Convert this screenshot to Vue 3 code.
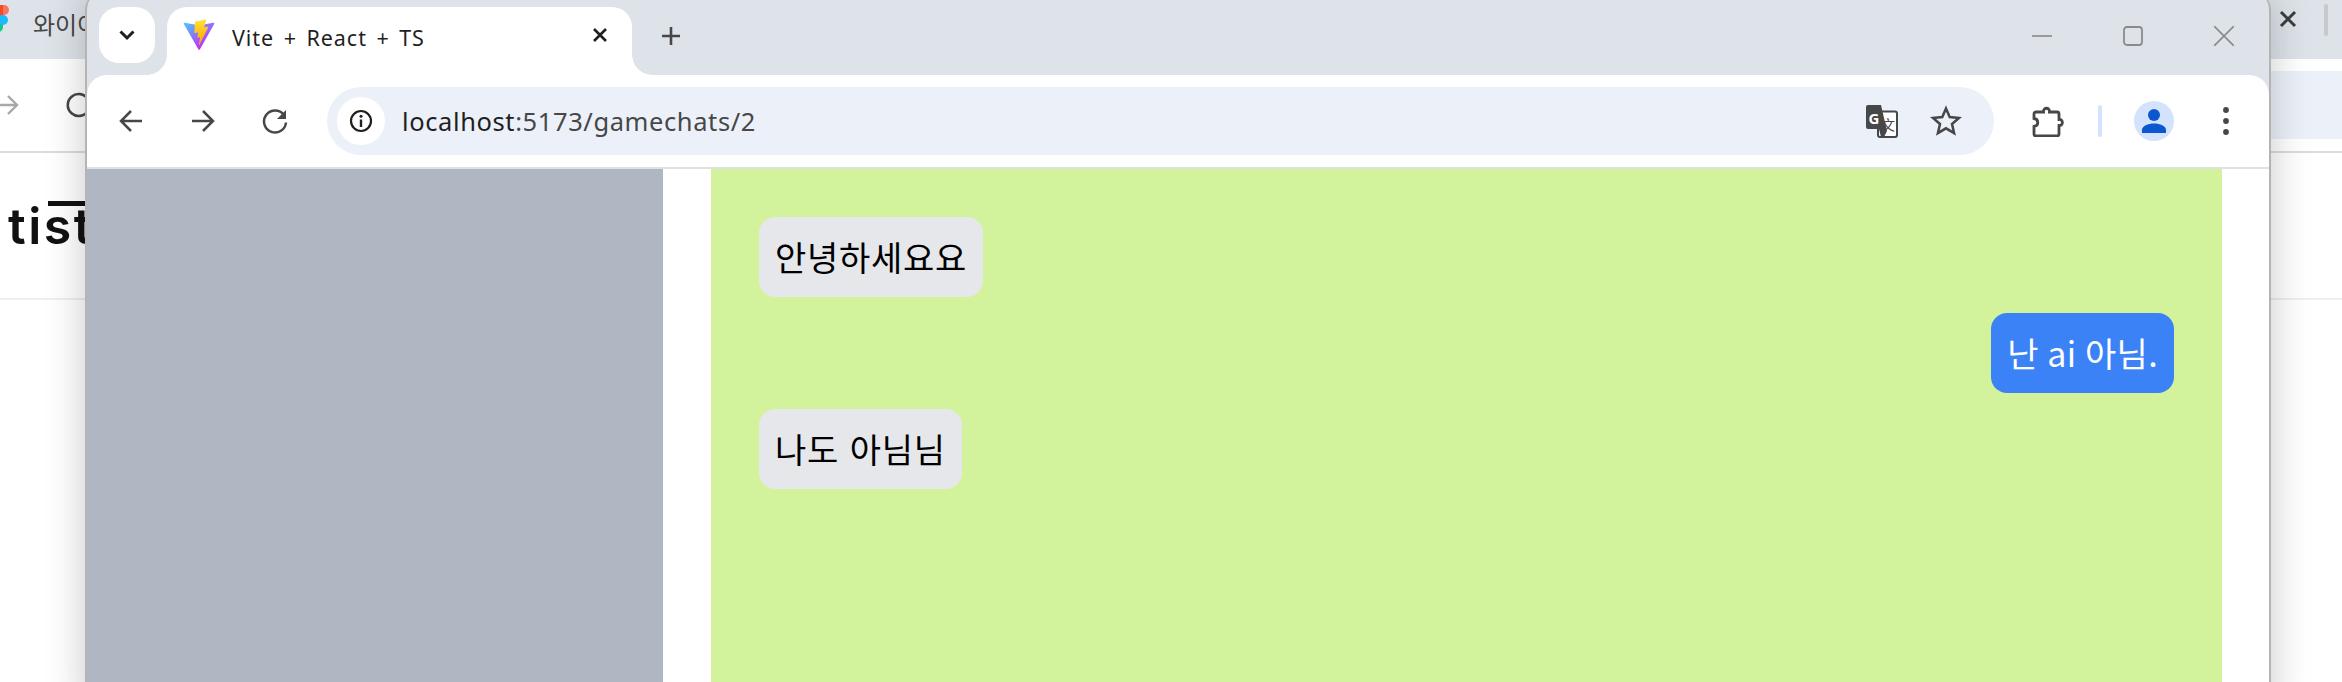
<script setup>
const messages = [
  { id: 1, text: '안녕하세요요', mine: false },
  { id: 2, text: '난 ai 아님.', mine: true },
  { id: 3, text: '나도 아님님', mine: false },
];
</script>

<template>
  <div class="desktop">
    <!-- window behind -->
    <div class="back-window">
      <div class="back-strip">
        <svg class="figma" width="14" height="28" viewBox="0 0 14 28">
          <path d="M0 0h6v10H0z" fill="#f24e1e" />
          <path d="M6 0h1a5 5 0 0 1 0 10H6z" fill="#ff7262" />
          <path d="M0 10h6v10H0z" fill="#a259ff" />
          <circle cx="6" cy="15" r="5" fill="#1abcfe" />
          <path d="M0 20h6v3a5 5 0 0 1-6 4z" fill="#0acf83" />
        </svg>
        <span class="back-title">와이어프레임</span>
        <svg class="back-close" width="20" height="20" viewBox="0 0 20 20">
          <path d="M3 3l14 14M17 3L3 17" stroke="#3c3c3c" stroke-width="3" fill="none" />
        </svg>
        <span class="back-grip"></span>
      </div>
      <div class="back-toolbar">
        <svg class="back-nav" width="90" height="30" viewBox="0 0 90 30">
          <path d="M-4 15h20M8 6l9 9-9 9" stroke="#a8a8a8" stroke-width="2.4" fill="none" />
          <path d="M88 9A11 11 0 1 0 88 21" stroke="#474747" stroke-width="2.6" fill="none" />
        </svg>
        <div class="back-url"></div>
      </div>
      <div class="back-header">
        <span class="back-logo">tist</span>
      </div>
    </div>

    <!-- main browser window -->
    <div class="window">
      <div class="tabstrip">
        <button class="tab-search">
          <svg width="18" height="12" viewBox="0 0 18 12">
            <path d="M2.5 2.5L9 9l6.5-6.5" stroke="#1f1f1f" stroke-width="3" fill="none" />
          </svg>
        </button>
        <div class="tab">
          <svg class="vite" width="32" height="32" viewBox="0 0 410 404" fill="none">
            <path d="M399.641 59.5246L215.643 388.545C211.844 395.338 202.084 395.378 198.228 388.618L10.5817 59.5563C6.38087 52.1896 12.6802 43.2665 21.0281 44.7586L205.223 77.6824C206.398 77.8924 207.601 77.8904 208.776 77.6763L389.119 44.8058C397.439 43.2894 403.768 52.1434 399.641 59.5246Z" fill="url(#viteA)" />
            <path d="M292.965 1.5744L156.801 28.2552C154.563 28.6937 152.906 30.5903 152.771 32.8664L144.395 174.33C144.198 177.662 147.258 180.248 150.51 179.498L188.42 170.749C191.967 169.931 195.172 173.055 194.443 176.622L183.18 231.775C182.422 235.487 185.907 238.661 189.532 237.56L212.947 230.446C216.577 229.344 220.065 232.527 219.297 236.242L201.398 322.875C200.278 328.294 207.486 331.249 210.492 326.603L212.5 323.5L323.454 102.072C325.312 98.3645 322.108 94.137 318.036 94.9228L279.014 102.454C275.347 103.161 272.227 99.746 273.262 96.1583L298.731 7.86689C299.767 4.27314 296.636 0.855181 292.965 1.5744Z" fill="url(#viteB)" />
            <defs>
              <linearGradient id="viteA" x1="6" y1="33" x2="235" y2="344" gradientUnits="userSpaceOnUse">
                <stop stop-color="#41D1FF" />
                <stop offset="1" stop-color="#BD34FE" />
              </linearGradient>
              <linearGradient id="viteB" x1="194.651" y1="8.818" x2="236.076" y2="292.989" gradientUnits="userSpaceOnUse">
                <stop stop-color="#FFEA83" />
                <stop offset="0.0833" stop-color="#FFDD35" />
                <stop offset="1" stop-color="#FFA800" />
              </linearGradient>
            </defs>
          </svg>
          <span class="tab-title">Vite + React + TS</span>
          <svg class="tab-close" width="16" height="16" viewBox="0 0 16 16">
            <path d="M2 2l12 12M14 2L2 14" stroke="#1f1f1f" stroke-width="2.6" fill="none" />
          </svg>
        </div>
        <svg class="new-tab" width="20" height="20" viewBox="0 0 20 20">
          <path d="M10 1v18M1 10h18" stroke="#474747" stroke-width="2.6" fill="none" />
        </svg>
        <div class="win-controls">
          <svg width="20" height="20" viewBox="0 0 20 20">
            <path d="M0 10h20" stroke="#8a8a8a" stroke-width="1.6" fill="none" />
          </svg>
          <svg width="20" height="20" viewBox="0 0 20 20">
            <rect x="1" y="1" width="18" height="18" rx="3" stroke="#8a8a8a" stroke-width="1.8" fill="none" />
          </svg>
          <svg width="20" height="20" viewBox="0 0 20 20">
            <path d="M0 0l20 20M20 0L0 20" stroke="#8a8a8a" stroke-width="1.6" fill="none" />
          </svg>
        </div>
      </div>

      <div class="toolbar">
        <div class="nav-buttons">
          <svg width="28" height="28" viewBox="0 0 28 28">
            <path d="M25 14H5M14 4L4 14l10 10" stroke="#474747" stroke-width="2.5" fill="none" />
          </svg>
          <svg width="28" height="28" viewBox="0 0 28 28">
            <path d="M3 14h21M14 4l10 10-10 10" stroke="#474747" stroke-width="2.5" fill="none" />
          </svg>
          <svg width="28" height="28" viewBox="0 0 28 28">
            <path d="M22.300 7.200A11 11 0 1 0 25 15.500" stroke="#474747" stroke-width="2.500" fill="none" />
            <path d="M25 3v9h-9z" fill="#474747" />
          </svg>
        </div>

        <div class="omnibox">
          <div class="site-info">
            <svg width="24" height="24" viewBox="0 0 24 24">
              <circle cx="12" cy="12" r="10" stroke="#1f1f1f" stroke-width="2.200" fill="none" />
              <path d="M12 10.500V18" stroke="#1f1f1f" stroke-width="2.400" fill="none" />
              <circle cx="12" cy="7.300" r="1.500" fill="#1f1f1f" />
            </svg>
          </div>
          <div class="url"><span class="host">localhost</span>:5173/gamechats/2</div>
          <svg class="translate" width="32" height="33" viewBox="0 0 32 33">
            <rect x="12" y="6.500" width="19" height="25.500" rx="2" stroke="#474747" stroke-width="2" fill="#fff" />
            <path d="M2 0h13l6 26 -3 6h-3L13 24H2a2 2 0 0 1-2-2V2a2 2 0 0 1 2-2z" fill="#474747" />
            <text x="2.500" y="19" class="translate-g">G</text>
            <text x="15" y="25" class="translate-x">文</text>
          </svg>
          <svg class="star" width="32" height="32" viewBox="0 0 32 32">
            <path d="M16 3.500l3.700 8.600 9.300.8-7 6.100 2.100 9.100-8.100-4.800-8.100 4.800 2.100-9.100-7-6.100 9.300-.8z" stroke="#474747" stroke-width="2.500" stroke-linejoin="miter" fill="none" />
          </svg>
        </div>

        <svg class="puzzle" width="32" height="32" viewBox="0 0 32 32">
          <path d="M4 7h7.500C11 2 18 2 17.500 7H25a2 2 0 0 1 2 2v5.500c4.500-.5 4.500 6.500 0 6V29a2 2 0 0 1-2 2H4a2 2 0 0 1-2-2v-7.500c5-.5 5-7.500 0-8V9a2 2 0 0 1 2-2z" stroke="#474747" stroke-width="2.800" fill="none" />
        </svg>
        <span class="divider"></span>
        <div class="avatar">
          <svg width="26" height="26" viewBox="0 0 26 26">
            <circle cx="13" cy="7" r="6" fill="#0b57d0" />
            <path d="M1 25v-3c0-4 6-6.500 12-6.500S25 18 25 22v3z" fill="#0b57d0" />
          </svg>
        </div>
        <svg class="menu" width="6" height="28" viewBox="0 0 6 28">
          <circle cx="3" cy="3" r="2.900" fill="#474747" />
          <circle cx="3" cy="14" r="2.900" fill="#474747" />
          <circle cx="3" cy="25" r="2.900" fill="#474747" />
        </svg>
      </div>

      <div class="page">
        <aside class="sidebar"></aside>
        <main class="chat-wrap">
          <div class="chat">
            <div v-for="m in messages" :key="m.id" class="row" :class="{ mine: m.mine }">
              <div class="bubble">{{ m.text }}</div>
            </div>
          </div>
        </main>
      </div>
    </div>
  </div>
</template>

<style>
html, body {
  margin: 0;
  overflow: hidden;
  background: #fff;
}
</style>

<style scoped>
.desktop {
  position: relative;
  width: 2342px;
  height: 682px;
  overflow: hidden;
  background: #fff;
  font-family: "Noto Sans", "Noto Sans CJK KR", sans-serif;
}

/* back window */
.back-window {
  position: absolute;
  inset: 0;
  display: flex;
  flex-direction: column;
}
.back-strip {
  height: 59px;
  background: #dee3ea;
  display: flex;
  align-items: center;
  position: relative;
}
.figma {
  position: absolute;
  left: -3px;
  top: 5px;
}
.back-title {
  position: absolute;
  left: 33px;
  top: 6px;
  font-size: 24px;
  color: #474747;
  white-space: nowrap;
}
.back-close {
  position: absolute;
  left: 2278px;
  top: 9px;
}
.back-grip {
  position: absolute;
  left: 2324px;
  top: 4px;
  width: 4px;
  height: 32px;
  border-radius: 2px;
  background: #c7c9cc;
}
.back-toolbar {
  height: 92px;
  background: #fff;
  border-bottom: 2px solid #dcdcdc;
  position: relative;
}
.back-nav {
  position: absolute;
  left: 0;
  top: 31px;
}
.back-url {
  position: absolute;
  left: 200px;
  right: 0;
  top: 12px;
  height: 68px;
  background: #ecf1f9;
}
.back-header {
  height: 145px;
  border-bottom: 2px solid #eee;
  position: relative;
}
.back-logo {
  position: absolute;
  left: 8px;
  top: 45px;
  font-family: Inter, sans-serif;
  font-size: 50px;
  font-weight: 600;
  line-height: 56px;
  color: #111;
  letter-spacing: 2.500px;
}
.back-logo::after {
  content: "";
  position: absolute;
  left: 40px;
  top: 3px;
  width: 60px;
  height: 5px;
  background: #111;
}

/* front window */
.window {
  position: absolute;
  left: 85px;
  top: -8px;
  width: 2186px;
  height: 720px;
  box-sizing: border-box;
  border-left: 2px solid #b4b4b4;
  border-right: 2px solid #b4b4b4;
  border-radius: 18px 18px 0 0;
  background: #dee3ea;
  box-shadow: 0 0 40px rgba(0, 0, 0, 0.22);
  display: flex;
  flex-direction: column;
}
.tabstrip {
  height: 83px;
  display: flex;
  align-items: flex-start;
  padding-top: 15px;
  box-sizing: border-box;
}
.tab-search {
  width: 56px;
  height: 56px;
  margin-left: 12px;
  padding: 0;
  border: 0;
  border-radius: 20px;
  background: #fff;
  display: flex;
  align-items: center;
  justify-content: center;
}
.tab {
  position: relative;
  width: 465px;
  height: 68px;
  margin-left: 12px;
  box-sizing: border-box;
  padding: 0 24px 12px 16px;
  border-radius: 20px 20px 0 0;
  background: #fff;
  display: flex;
  align-items: center;
}
.tab::before,
.tab::after {
  content: "";
  position: absolute;
  bottom: 0;
  width: 20px;
  height: 20px;
}
.tab::before {
  left: -20px;
  background: radial-gradient(circle at 0 0, transparent 19.500px, #fff 20px);
}
.tab::after {
  right: -20px;
  background: radial-gradient(circle at 100% 0, transparent 19.500px, #fff 20px);
}
.tab-title {
  margin-left: 17px;
  margin-top: 5px;
  font-size: 21.500px;
  letter-spacing: 0.950px;
  word-spacing: 3px;
  color: #1f1f1f;
  white-space: nowrap;
}
.tab-close {
  margin-left: auto;
}
.new-tab {
  margin-left: 29px;
  margin-top: 19px;
}
.win-controls {
  margin-left: auto;
  margin-right: 35px;
  margin-top: 19px;
  display: flex;
  gap: 71px;
}

.toolbar {
  height: 94px;
  box-sizing: border-box;
  border-bottom: 2px solid #e0e0e0;
  border-radius: 20px 20px 0 0;
  background: #fff;
  display: flex;
  align-items: center;
  position: relative;
}
.nav-buttons {
  margin-left: 30px;
  display: flex;
  gap: 44px;
}
.omnibox {
  width: 1667px;
  height: 68px;
  margin-left: 38px;
  border-radius: 34px;
  background: #ecf1f9;
  display: flex;
  align-items: center;
}
.site-info {
  width: 48px;
  height: 48px;
  margin-left: 10px;
  border-radius: 50%;
  background: #fff;
  display: flex;
  align-items: center;
  justify-content: center;
}
.url {
  margin-left: 17px;
  font-size: 25.500px;
  letter-spacing: 0.600px;
  color: #474747;
  white-space: nowrap;
}
.host {
  color: #1f1f1f;
}
.translate {
  margin-left: auto;
}
.translate-g {
  font-family: "Noto Sans", sans-serif;
  font-size: 15px;
  font-weight: 700;
  fill: #fff;
}
.translate-x {
  font-family: "Noto Sans CJK SC", sans-serif;
  font-size: 14px;
  fill: #474747;
}
.star {
  margin-left: 32px;
  margin-right: 32px;
}
.puzzle {
  margin-left: 38px;
}
.divider {
  width: 4px;
  height: 32px;
  margin-left: 34px;
  border-radius: 2px;
  background: #d3e3fd;
}
.avatar {
  width: 40px;
  height: 40px;
  margin-left: 32px;
  border-radius: 50%;
  background: #d3e3fd;
  display: flex;
  align-items: center;
  justify-content: center;
}
.menu {
  margin-left: 49px;
}

.page {
  flex: 1;
  display: flex;
  background: #fff;
}
.sidebar {
  width: 576px;
  background: #b0b7c2;
}
.chat-wrap {
  flex: 1;
  padding: 0 47px 0 48px;
}
.chat {
  height: 100%;
  box-sizing: border-box;
  padding: 48px;
  background: #d2f39c;
  display: flex;
  flex-direction: column;
  gap: 16px;
}
.row {
  display: flex;
}
.row.mine {
  justify-content: flex-end;
}
.bubble {
  padding: 16px;
  border-radius: 16px;
  background: #e5e7eb;
  color: #000;
  font-family: "Noto Sans CJK KR", sans-serif;
  font-size: 34px;
  letter-spacing: 0.720px;
  word-spacing: 2.500px;
  line-height: 48px;
  white-space: nowrap;
}
.mine .bubble {
  background: #3b82f6;
  color: #fff;
  letter-spacing: 0.350px;
  word-spacing: 0.500px;
}
</style>
